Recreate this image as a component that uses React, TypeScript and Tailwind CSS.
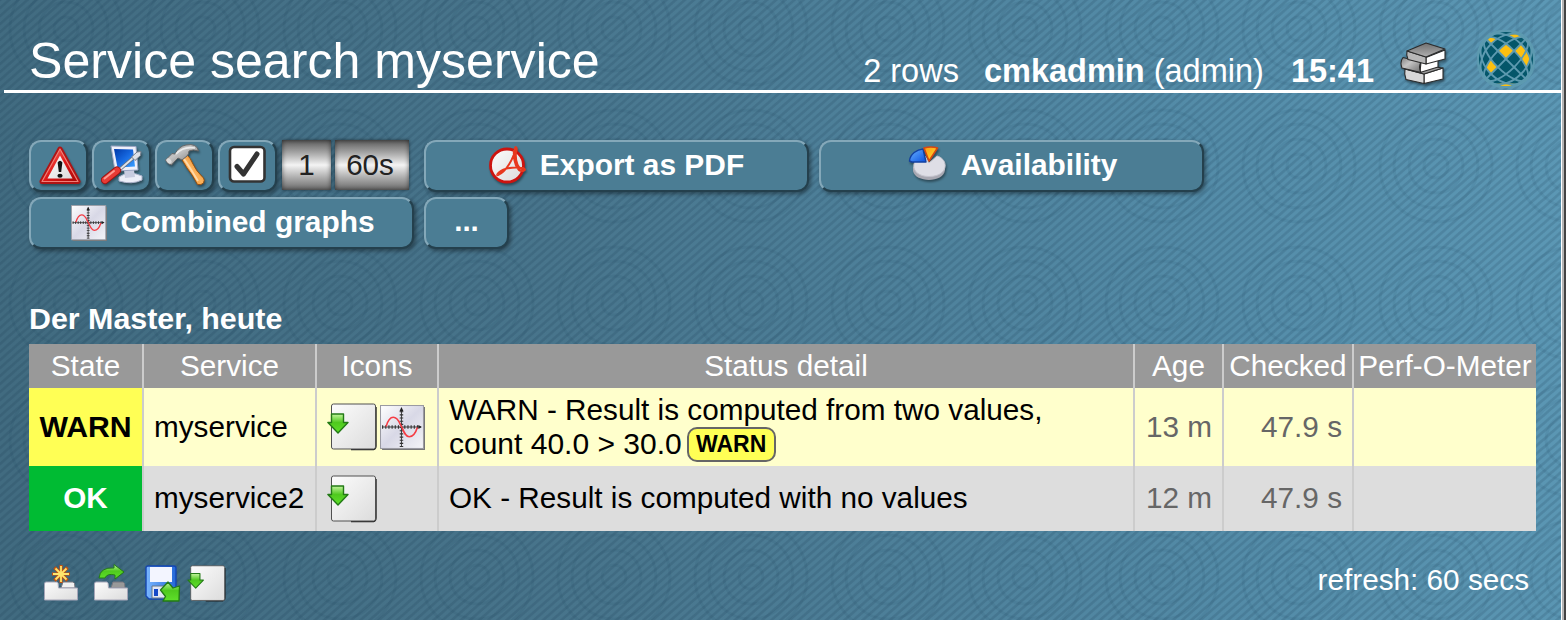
import React from "react";

function Defs() {
  return (
    <svg className="absolute size-0" aria-hidden="true">
      <defs>
        <linearGradient id="paper" x1="0" y1="0" x2="1" y2="1">
          <stop offset="0" stopColor="#fcfcfc" />
          <stop offset="1" stopColor="#dcdcdc" />
        </linearGradient>
        <linearGradient id="plot" x1="0" y1="0" x2="1" y2="1">
          <stop offset="0" stopColor="#ffffff" />
          <stop offset="0.5" stopColor="#d8d8e6" />
          <stop offset="1" stopColor="#f4f4f8" />
        </linearGradient>
        <linearGradient id="green" x1="0" y1="0" x2="0" y2="1">
          <stop offset="0" stopColor="#c4f59e" />
          <stop offset="0.45" stopColor="#4fc91e" />
          <stop offset="1" stopColor="#5fe02a" />
        </linearGradient>
        <linearGradient id="red" x1="0" y1="0" x2="1" y2="1">
          <stop offset="0" stopColor="#ff7a6a" />
          <stop offset="0.5" stopColor="#e01818" />
          <stop offset="1" stopColor="#a80808" />
        </linearGradient>
        <linearGradient id="screen" x1="0" y1="0" x2="1" y2="1">
          <stop offset="0" stopColor="#0038a8" />
          <stop offset="0.5" stopColor="#1668e0" />
          <stop offset="1" stopColor="#3ca0ff" />
        </linearGradient>
        <linearGradient id="wood" x1="0" y1="1" x2="1" y2="0">
          <stop offset="0" stopColor="#d87414" />
          <stop offset="0.5" stopColor="#ffb45c" />
          <stop offset="1" stopColor="#c8660c" />
        </linearGradient>
        <linearGradient id="steel" x1="0" y1="0" x2="1" y2="1">
          <stop offset="0" stopColor="#808080" />
          <stop offset="0.4" stopColor="#c4c4c4" />
          <stop offset="1" stopColor="#6a6a6a" />
        </linearGradient>
        <linearGradient id="cover" x1="0" y1="0" x2="0" y2="1">
          <stop offset="0" stopColor="#707070" />
          <stop offset="1" stopColor="#b0b0b0" />
        </linearGradient>
        <linearGradient id="floppy" x1="0" y1="0" x2="1" y2="0">
          <stop offset="0" stopColor="#7ab6ff" />
          <stop offset="1" stopColor="#2468d8" />
        </linearGradient>
        <linearGradient id="gold" x1="0" y1="0" x2="1" y2="1">
          <stop offset="0" stopColor="#ff9a10" />
          <stop offset="1" stopColor="#ffe030" />
        </linearGradient>
        <linearGradient id="blue" x1="0" y1="0" x2="1" y2="1">
          <stop offset="0" stopColor="#6ab4ff" />
          <stop offset="1" stopColor="#0a50e0" />
        </linearGradient>
      </defs>
    </svg>
  );
}

function Backdrop() {
  return (
    <svg className="absolute inset-0 -z-10 h-full w-full" aria-hidden="true">
      <defs>
        <linearGradient id="sea" gradientUnits="userSpaceOnUse" x1="0" y1="330" x2="1566" y2="130">
          <stop offset="0" stopColor="#416b80" />
          <stop offset="0.35" stopColor="#48758c" />
          <stop offset="0.75" stopColor="#538ba7" />
          <stop offset="1" stopColor="#5c98b5" />
        </linearGradient>
        <pattern id="stripes" width="9.13" height="8" patternUnits="userSpaceOnUse">
          <path d="M-4.565 4L4.565 -4M-4.565 12L13.695 -4M4.565 12L13.695 4" stroke="#123449" strokeOpacity="0.16" strokeWidth="2.8" />
        </pattern>
        <pattern id="rings" x="1231" y="98" width="137" height="137" patternUnits="userSpaceOnUse">
          <g fill="none" stroke="#123449" strokeOpacity="0.08" strokeWidth="3">
            <circle cx="68" cy="68" r="12" />
            <circle cx="68" cy="68" r="27" />
            <circle cx="68" cy="68" r="42" />
            <circle cx="68" cy="68" r="56" />
          </g>
        </pattern>
      </defs>
      <rect width="100%" height="100%" fill="url(#sea)" />
      <rect width="100%" height="100%" fill="url(#stripes)" />
      <rect width="100%" height="100%" fill="url(#rings)" />
    </svg>
  );
}

const shadow = "drop-shadow-[1px_2px_1px_rgba(0,0,0,0.4)]";

function WarningIcon() {
  return (
    <svg viewBox="0 0 44 40" className={`mb-[3px] ml-0.5 h-10 w-11 ${shadow}`}>
      <path d="M22 4L40 36.500H4Z" fill="#c41616" stroke="#b01414" strokeWidth="5" strokeLinejoin="round" />
      <path d="M22 4L40 36.500H4Z" fill="url(#red)" stroke="#f08078" strokeWidth="1.200" strokeLinejoin="round" />
      <path d="M22 10.500L34.500 33.500H9.500Z" fill="url(#paper)" />
      <path d="M19.600 17.500Q22 14 24.400 17.500L23.200 27H20.800Z" fill="#111" />
      <ellipse cx="22" cy="30.800" rx="2.600" ry="2" fill="#111" />
    </svg>
  );
}

function ComputerIcon() {
  return (
    <svg viewBox="0 0 44 42" className={`mb-0.5 h-[42px] w-11 ${shadow}`}>
      <path d="M19 33Q29 26 42 32V36Q32 41 19 37Z" fill="#eceef8" stroke="#aeb4cc" />
      <path d="M24 26L34 26L35 33L25 34Z" fill="#c8cce0" />
      <path d="M11 2L36 2.500L38 26L15 27Z" fill="#eef0fa" stroke="#9ca6c4" />
      <path d="M14 5L33 5.500L35 22.500L17.500 23.500Z" fill="url(#screen)" />
      <path d="M18 27L33 14" stroke="#69717e" strokeWidth="3.600" />
      <path d="M18 27L33 14" stroke="#dfe4eb" strokeWidth="1.800" />
      <path d="M31.500 13L37 8L41 7.500L40.500 11.500L35 16.500Z" stroke="#747c88" fill="#dde1e8" strokeLinejoin="round" />
      <path d="M5 36L17 26.500" stroke="#9b1111" strokeWidth="8" strokeLinecap="round" />
      <path d="M5 36L17 26.500" stroke="#e83b35" strokeWidth="6.200" strokeLinecap="round" />
      <path d="M4.500 34.500L14 27" stroke="#ff9a90" strokeWidth="2" strokeLinecap="round" />
    </svg>
  );
}

function HammerIcon() {
  return (
    <svg viewBox="0 0 44 44" className={`mb-0.5 ml-0.5 size-11 ${shadow}`}>
      <path d="M17.500 16L23 12Q26 14 29 21Q32 28 39.500 35Q41 37 39.500 40Q37 42.500 33.500 41.500Q28 31 23 25Z" fill="url(#wood)" stroke="#97500f" />
      <path d="M20 16Q25 23 34 38" stroke="#ffd9a8" strokeWidth="2" fill="none" />
      <path d="M1.500 17L8 10.500L11 11Q15 3 22 2Q33 0 34.500 8Q29 6 25 8Q25 11 23 13L18 17L14 15L11 18L7.500 22Q3 21 1.500 17Z" fill="url(#steel)" stroke="#666" strokeLinejoin="round" />
      <path d="M12 11Q19 3 31 5" stroke="#ececec" strokeWidth="1.600" fill="none" />
      <ellipse cx="5" cy="18" rx="2" ry="3" transform="rotate(-45 5 18)" fill="#dcdcdc" />
    </svg>
  );
}

function CheckIcon() {
  return (
    <svg viewBox="0 0 38 38" className="mr-0.5 mb-1 size-[38px]">
      <rect x="2" y="2" width="34.500" height="34.500" rx="4" fill="#fff" stroke="#333" strokeWidth="2.600" />
      <path d="M9 21.500L15.500 29L29 9" fill="none" stroke="#333" strokeWidth="5" strokeLinecap="round" strokeLinejoin="round" />
    </svg>
  );
}

function PdfIcon() {
  return (
    <svg viewBox="0 0 38 40" className={`h-10 w-[38px] ${shadow}`}>
      <circle cx="18" cy="20.500" r="16.500" fill="url(#paper)" stroke="#cc1410" strokeWidth="2.800" />
      <path d="M9 30C17 27 25 13 26 4C26 0 29 3 27 7C26 17 29 25 36 24M9 30C6 32 11 20 34 23Q38 25 34 26C28 27 24 16 25 5" fill="none" stroke="#e8381e" strokeWidth="2" strokeLinejoin="round" />
    </svg>
  );
}

function PieIcon() {
  return (
    <svg viewBox="0 0 40 38" className={`ml-0.5 h-[38px] w-10 ${shadow}`}>
      <path d="M5 21V25C7 37 36 37 37 24V19Z" fill="#a8a8b2" />
      <path d="M21 17L17 10C1 12 2 30.500 21 30.500C41 30.500 41 13 29 10Z" fill="#dedee6" stroke="#c4c4ce" />
      <path d="M1.500 15C2 8 9 3.500 15 3L18 16L4 16Z" fill="url(#blue)" stroke="#1240a0" strokeWidth="1.400" strokeLinejoin="round" />
      <path d="M16 2Q23 0 29.500 2L21 15Z" fill="url(#gold)" stroke="#d84810" strokeWidth="1.600" strokeLinejoin="round" />
    </svg>
  );
}

function GraphIcon({ className }: { className: string }) {
  return (
    <svg viewBox="0 0 44 44" className={className}>
      <path d="M2 43.300H43.300V2" fill="none" stroke="#777" strokeWidth="1.400" />
      <rect x="0.500" y="0.500" width="42" height="42" fill="url(#plot)" stroke="#9a9aa2" />
      <path d="M21 3V41M2 21.500H40" stroke="#333" strokeWidth="0.900" />
      <path d="M21 6V41" stroke="#333" strokeWidth="3.400" strokeDasharray="1.100 2" />
      <path d="M2 21.500H38" stroke="#333" strokeWidth="3.400" strokeDasharray="1.100 2" />
      <path d="M19 6L21 2L23 6ZM37.500 19.500L41 21.500L37.500 23.500Z" fill="#222" />
      <path d="M6 21C8 14 10 12 13 12C18 12 19 18 21.500 22C23.500 27 25 31 28.500 31C32 31 35 27 36.500 22" fill="none" stroke="#f53c44" strokeWidth="1.600" />
    </svg>
  );
}

function CheckinIcon({ className }: { className: string }) {
  return (
    <svg viewBox="0 0 50 48" className={className}>
      <path d="M24 46.500H46.500Q49 46 49 43V4" fill="none" stroke="#222" strokeWidth="1.400" />
      <rect x="4.500" y="1" width="44" height="45" rx="2" fill="url(#paper)" stroke="#505050" />
      <path d="M4.500 11H16.500V19.500H21L11 30L0.900 19.500H4.500Z" fill="url(#green)" stroke="#237a16" strokeWidth="1.400" strokeLinejoin="round" />
    </svg>
  );
}

function BooksIcon() {
  return (
    <svg viewBox="0 0 46 44" className={`h-11 w-[46px] ${shadow}`}>
      <g stroke="#2b2b2b" strokeWidth="1.100" strokeLinejoin="round">
        <path d="M24 32L43 26V37L24 41.500Z" fill="#fff" />
        <path d="M5 27L24 32V41.500L6 37.500Q4 32 5 27Z" fill="#d8d8d8" />
        <path d="M5 27L20 23L43 26L24 32Z" fill="#999" />
        <path d="M21 20L38 16.500V25L20 30.500Z" fill="#fff" />
        <path d="M3 15.500L21 20Q18 25 21 30.500L2 26Q-0.500 20 3 15.500Z" fill="url(#steel)" />
        <path d="M26 15.500L45 8V17L26 22Z" fill="#fff" />
        <path d="M7 9L26 15V22L8 17.500Q6 13 7 9Z" fill="#b8b8b8" />
        <path d="M7 9L26 1L45 7L26 15Z" fill="url(#cover)" />
      </g>
    </svg>
  );
}

const STEP = (23.5 * Math.PI) / 180;

// Projects a crossing of two tilted meridians onto the face of the ball.
function project(i: number, j: number) {
  const ta = Math.tan(i * STEP);
  const tb = Math.tan(j * STEP);
  const r = 29 / Math.sqrt(1 + ta * ta + tb * tb);
  const a = ta * r;
  const b = tb * r;
  return `${(29 + (a - b) * Math.SQRT1_2).toFixed(2)},${(30 - (a + b) * Math.SQRT1_2).toFixed(2)}`;
}

const litCells = [[0, 0], [1, -1], [1, -2], [-2, 0], [0, 2], [2, 1], [-3, -3]];

function GlobeIcon() {
  return (
    <svg viewBox="0 0 58 60" className="h-[60px] w-[58px]">
      <circle cx="29" cy="30" r="28.800" fill="#04566a" />
      {litCells.map(([i, j]) => (
        <polygon
          key={`${i},${j}`}
          fill="#fdc010"
          points={[project(i, j), project(i + 1, j), project(i + 1, j + 1), project(i, j + 1)].join(" ")}
        />
      ))}
      <g fill="none" stroke="#5d9ab0" strokeWidth="1.900">
        {[45, -45].map((angle) => (
          <g key={angle} transform={`rotate(${angle} 29 30)`}>
            <path d="M29 1V59" />
            {[1, 2, 3].map((k) => (
              <ellipse key={k} cx="29" cy="30" rx={29 * Math.sin(k * STEP)} ry="29" />
            ))}
          </g>
        ))}
      </g>
    </svg>
  );
}

function TrayIcon({ kind }: { kind: "new" | "move" }) {
  return (
    <svg viewBox="0 0 36 38" className="mt-px h-[38px] w-9">
      <path d="M20 18H30Q32 18 32 24H18Z" fill={kind === "new" ? "#f0f0f0" : "#999"} stroke="#77777f" />
      <path d="M1.500 36V20Q1.500 18 3 18H14Q15.500 18 15.500 24H34.500V36Z" fill="url(#paper)" stroke="#a6a6b8" />
      {kind === "new" ? (
        <>
          <path d="M18 1V19M9 10H27M11.500 3.500L24.500 16.500M24.500 3.500L11.500 16.500" stroke="#c8520c" strokeWidth="3.200" />
          <path d="M18 2V18M10 10H26M12.500 4.500L23.500 15.500M23.500 4.500L12.500 15.500" stroke="#ffe66d" strokeWidth="1.800" />
        </>
      ) : (
        <path d="M6 14Q7 3 21 4V0.500L31 8L22 15V11Q14 9 12 14Z" fill="url(#green)" stroke="#237a16" strokeLinejoin="round" />
      )}
    </svg>
  );
}

function SaveIcon() {
  return (
    <svg viewBox="0 0 36 38" className="h-[38px] w-9">
      <path d="M1 3Q1 1 3 1H29Q31 1 31 3V34H4L1 31Z" fill="url(#floppy)" stroke="#1446b0" strokeWidth="1.400" />
      <path d="M5 2H27V17H5Z" fill="#f3f5ff" />
      <path d="M7 21H24V33H7Z" fill="#e1e6f5" stroke="#678" />
      <path d="M9 24H13V31H9Z" fill="#1648c8" />
      <path d="M15.500 25L23 17L28 23L34.500 21L34 36H18L20.500 31.500Z" fill="url(#green)" stroke="#237a16" strokeWidth="1.300" strokeLinejoin="round" />
    </svg>
  );
}

const bevel =
  "box-border flex items-center justify-center rounded-[12px] border-2 border-t-[#84a8b9] border-l-[#84a8b9] border-r-[#24404d] border-b-[#24404d] bg-[#4b7d94] shadow-[2px_2px_4px_rgba(0,0,0,0.4)]";

function IconButton({ children }: { children: React.ReactNode }) {
  return <button className={`${bevel} h-[52px] w-[59px]`}>{children}</button>;
}

function TextButton({ icon, children }: { icon: React.ReactNode; children: React.ReactNode }) {
  return (
    <button className={`${bevel} h-[52px] w-[385px] gap-[13px] pb-0.5 text-[29.9px] font-bold`}>
      {icon}
      <span>{children}</span>
    </button>
  );
}

const metal =
  "flex h-[50px] items-center justify-center bg-linear-to-b from-[#5c5c5c] via-[#f4f4f4] to-[#6c6c6c] text-[29.6px] text-[#222] shadow-[inset_0_0_5px_rgba(0,0,0,0.55),0_0_3px_rgba(0,0,0,0.5)]";

const head = "border-r-2 border-[#ccc] p-0 font-normal text-white last:border-r-0";
const cell = "border-r-2 border-[#ccc] px-[10px] py-0 last:border-r-0";

export default function App() {
  return (
    <div className="relative isolate flex h-[620px] w-[1566px] overflow-hidden font-['Liberation_Sans',sans-serif] text-[29.72px] leading-[34px] text-white">
      <Defs />
      <Backdrop />
      <main className="flex w-[1561px] flex-col">
        <header className="ml-1 flex h-[93px] justify-between border-b-[3px] border-white pl-[25px] pr-[26px]">
          <h1 className="pt-[32px] text-[50.1px] leading-[58px] whitespace-nowrap">Service search myservice</h1>
          <div className="flex text-[32.5px] whitespace-nowrap">
            <span className="mt-[54px]">2 rows</span>
            <span className="mt-[54px] ml-[25px]"><b>cmkadmin</b> (admin)</span>
            <b className="mt-[54px] ml-[27px]">15:41</b>
            <div className="mt-[42px] ml-[26px]"><BooksIcon /></div>
            <div className="mt-[29px] ml-[31px]"><GlobeIcon /></div>
          </div>
        </header>

        <nav className="mt-[47px] ml-[29px] flex flex-col gap-[5px]">
          <div className="flex h-[52px]">
            <div className="flex w-[253px] gap-1">
              <IconButton><WarningIcon /></IconButton>
              <IconButton><ComputerIcon /></IconButton>
              <IconButton><HammerIcon /></IconButton>
              <IconButton><CheckIcon /></IconButton>
            </div>
            <div className={`${metal} w-[49px]`}>1</div>
            <div className={`${metal} ml-1 w-[74px] pr-1`}>60s</div>
            <div className="ml-[15px] flex gap-[10px]">
              <TextButton icon={<PdfIcon />}>Export as PDF</TextButton>
              <TextButton icon={<PieIcon />}>Availability</TextButton>
            </div>
          </div>
          <div className="flex gap-[10px]">
            <TextButton icon={<GraphIcon className="mt-px ml-[3px] size-9" />}>Combined graphs</TextButton>
            <button className={`${bevel} h-[52px] w-[85px] pb-1 text-[29.6px] font-bold`}>...</button>
          </div>
        </nav>

        <h3 className="mt-[52px] ml-[29px] h-[43px] text-[30.4px] font-bold">Der Master, heute</h3>
        <table className="ml-[29px] w-[1507px] table-fixed border-collapse bg-[#ddd] whitespace-nowrap text-black">
          <colgroup>
            <col className="w-[114px]" />
            <col className="w-[173px]" />
            <col className="w-[122px]" />
            <col className="w-[696px]" />
            <col className="w-[89px]" />
            <col className="w-[130px]" />
            <col className="w-[183px]" />
          </colgroup>
          <thead>
            <tr className="h-11 bg-[#999]">
              {["State", "Service", "Icons", "Status detail", "Age", "Checked", "Perf-O-Meter"].map((t) => (
                <th key={t} className={head}>{t}</th>
              ))}
            </tr>
          </thead>
          <tbody>
            <tr className="h-[78px] bg-[#ffffcc]">
              <td className="border-r-2 border-[#ccc] bg-[#ffff55] p-0 text-center text-[30.2px] font-bold">WARN</td>
              <td className={cell}>myservice</td>
              <td className={cell}>
                <div className="flex items-center gap-[3px]">
                  <CheckinIcon className="h-12 w-[50px] shrink-0" />
                  <GraphIcon className="size-[45px] shrink-0" />
                </div>
              </td>
              <td className={cell}>
                WARN - Result is computed from two values,
                <br />
                <span className="flex h-[34px] items-center">
                  <span className="text-[30px]">count 40.0 &gt; 30.0</span>
                  <b className="ml-[5px] flex h-[35px] w-[89px] items-center justify-center rounded-[10px] border-2 border-[#666] bg-[#ffff55] text-[23px]">WARN</b>
                </span>
              </td>
              <td className={`${cell} text-right text-[#666]`}>13 m</td>
              <td className={`${cell} text-right text-[#666]`}>47.9 s</td>
              <td className={cell} />
            </tr>
            <tr className="h-[65px]">
              <td className="border-r-2 border-[#ccc] bg-[#00bb33] px-0 pt-0 pb-[2px] text-center font-bold text-white">OK</td>
              <td className={`${cell} pb-[2px]`}>myservice2</td>
              <td className={cell}><CheckinIcon className="h-12 w-[50px]" /></td>
              <td className={`${cell} pb-[2px]`}>OK - Result is computed with no values</td>
              <td className={`${cell} pb-[2px] text-right text-[#666]`}>12 m</td>
              <td className={`${cell} pb-[2px] text-right text-[#666]`}>47.9 s</td>
              <td className={cell} />
            </tr>
          </tbody>
        </table>

        <footer className="mt-8 flex justify-between pr-8 pl-[43px]">
          <div className="flex">
            <TrayIcon kind="new" />
            <div className="ml-[14px]"><TrayIcon kind="move" /></div>
            <div className="ml-4 mt-[2px]"><SaveIcon /></div>
            <CheckinIcon className="mt-[2px] ml-[6px] h-[37px] w-[39px]" />
          </div>
          <span>refresh: 60 secs</span>
        </footer>
      </main>
      <div className="w-[5px] border-r-2 border-l border-l-white border-r-[#444] bg-[#b5b5b5]" />
    </div>
  );
}
